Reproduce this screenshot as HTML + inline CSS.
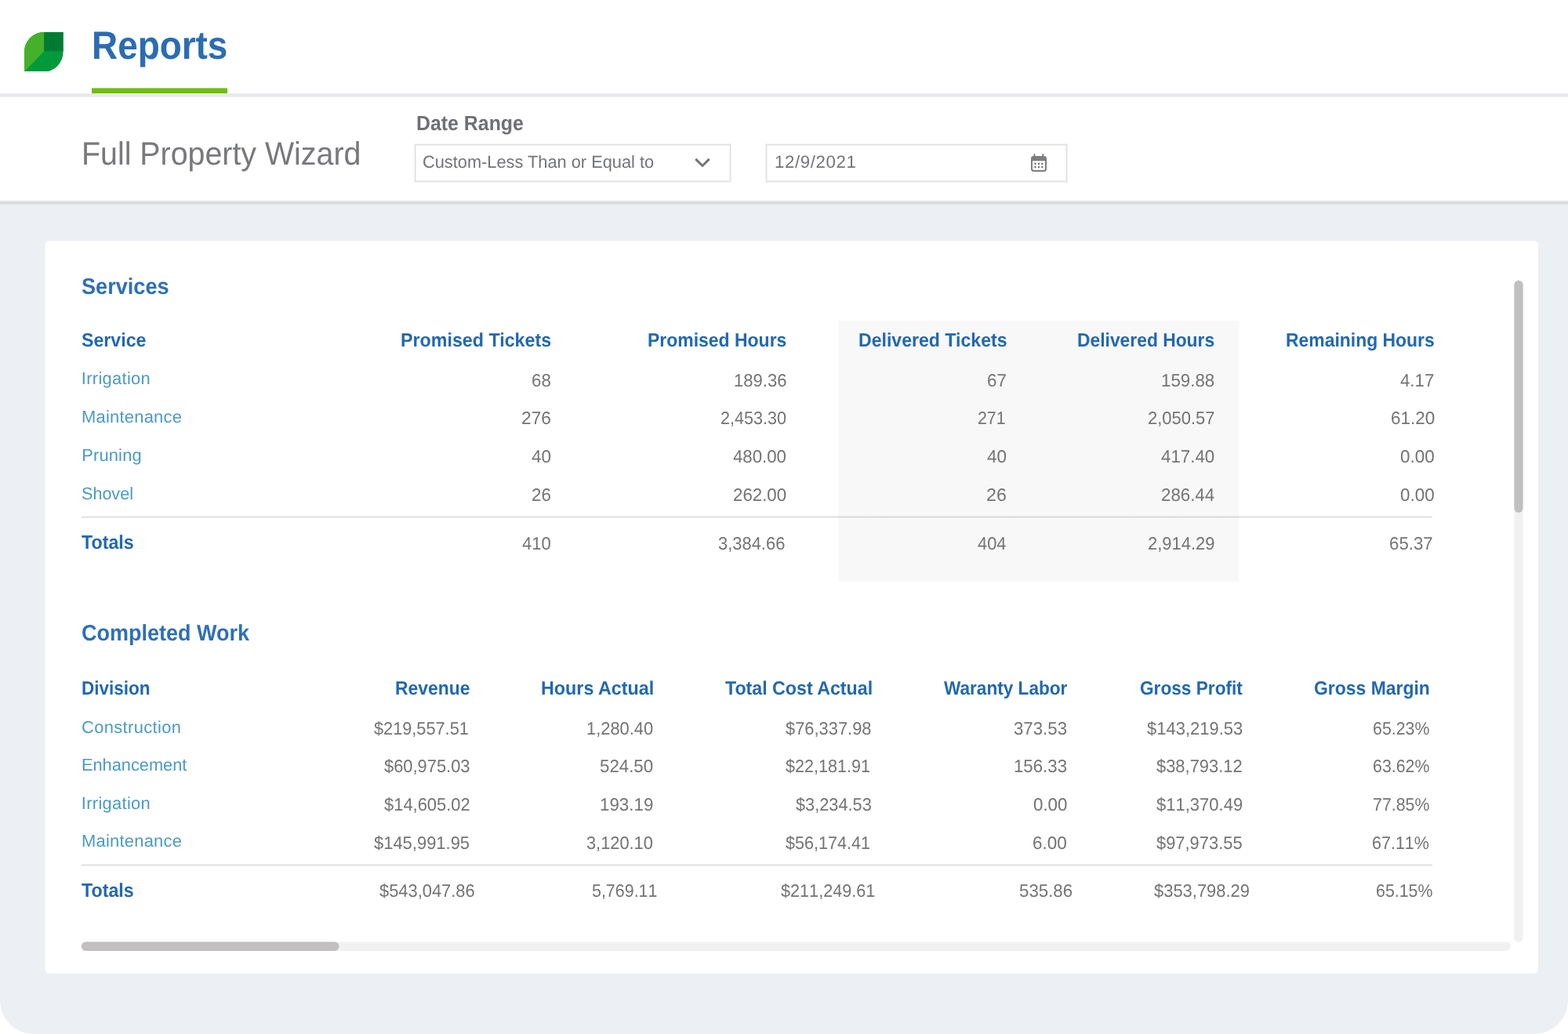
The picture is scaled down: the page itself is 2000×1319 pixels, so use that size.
<!DOCTYPE html>
<html lang="en">
<head>
<meta charset="utf-8">
<title>Reports</title>
<style>
html,body{margin:0;padding:0;}
body{width:2000px;height:1319px;overflow:hidden;background:#fff;position:relative;font-family:"Liberation Sans", sans-serif;}
.t{position:absolute;white-space:nowrap;line-height:0;transform-origin:0 0;text-rendering:geometricPrecision;}
.n{font-size:22.9px;color:#747476;font-kerning:none;}
.k0{font-size:50.3px;color:#2b6cb3;font-weight:700;}
.k1{font-size:41.3px;color:#78797c;}
.k2{font-size:26.3px;color:#6f7073;font-weight:700;}
.k3{font-size:22.2px;color:#737477;}
.k4{font-size:28.8px;color:#2e70b6;font-weight:700;}
.k5{font-size:24.4px;color:#2368af;font-weight:700;}
.k6{font-size:21.9px;color:#4b9ac3;}
.k7{font-size:24.6px;color:#2368af;font-weight:700;}

.abs{position:absolute;}
#page{position:absolute;left:0;top:0;width:2000px;height:1319px;background:#eceff4;border-radius:0 0 43px 43px;overflow:hidden;will-change:transform;}
#hdr{position:absolute;left:0;top:0;width:2000px;height:119px;background:#fff;}
#hdrline{position:absolute;left:0;top:119px;width:2000px;height:5px;background:linear-gradient(#eaebee 0 1px,#e8e9ed 1px 4px,#eff0f3 4px 5px);}
#tabline{position:absolute;left:117px;top:112px;width:173px;height:7px;background:linear-gradient(#a5d46f 0 1px,#74ba21 1px 5px,#6cb90f 5px 7px);}
#filter{position:absolute;left:0;top:124px;width:2000px;height:133px;background:#fff;}
#filterline{position:absolute;left:0;top:255px;width:2000px;height:7px;background:linear-gradient(#fafafa 0 1px,#e9eaec 1px 2px,#dcdde0 2px 3px,#d9dade 3px 4px,#dbdce0 4px 5px,#e3e5e9 5px 6px,#eaecf1 6px 7px);}
#shade{position:absolute;left:1069px;top:409px;width:511px;height:333px;background:#f8f8f8;}
.sep{position:absolute;left:104px;width:1723px;height:3px;background:linear-gradient(rgba(0,0,0,.07) 0 1px,rgba(10,20,40,.125) 1px 2px,rgba(0,0,0,.065) 2px 3px);}
.box{position:absolute;box-sizing:border-box;border:1px solid #dfe0e2;background:#fff;box-shadow:0 0 0 1px #f3f3f4, inset 0 0 0 1px #f1f1f2;}
</style>
</head>
<body>
<div id="page">
<div id="hdr"></div>
<div id="hdrline"></div>
<div id="tabline"></div>
<div id="filter"></div>
<div id="filterline"></div>
<svg class="abs" style="left:31.3px;top:40.8px" width="49.6" height="50.6" viewBox="0 0 50 50" preserveAspectRatio="none">
  <path d="M0 50 L0 25 A25 25 0 0 1 25 0 L50 0 L50 25 A25 25 0 0 1 25 50 Z" fill="#009a3a"/>
  <path d="M0 50 L0 25 A25 25 0 0 1 25 0 L25.5 0 L25.5 24 Z" fill="#45b02a"/>
  <rect x="25.5" y="0" width="24.5" height="24" fill="#007b33"/>
</svg>
<div class="box" style="left:529px;top:184px;width:403px;height:48px;"></div>
<div class="box" style="left:977px;top:184px;width:384px;height:48px;"></div>
<svg class="abs" style="left:885px;top:200.4px" width="22" height="14" viewBox="0 0 22 14"><path d="M2.3 2.9 L11 11.5 L19.7 2.9" fill="none" stroke="#727476" stroke-width="3"/></svg>
<svg class="abs" style="left:1314px;top:196px" width="22" height="24" viewBox="0 0 22 24">
  <rect x="2" y="3.9" width="18" height="18" rx="2.4" fill="none" stroke="#7b7d80" stroke-width="2"/>
  <rect x="2" y="3.9" width="18" height="5.4" fill="#7b7d80"/>
  <rect x="4.5" y="0.1" width="1.9" height="5" rx=".9" fill="#7b7d80"/><rect x="15.4" y="0.1" width="1.9" height="5" rx=".9" fill="#7b7d80"/>
  <g fill="#77797c"><rect x="5.4" y="11.6" width="2.2" height="2.4"/><rect x="9.9" y="11.6" width="2.2" height="2.4"/><rect x="14.2" y="11.6" width="2.2" height="2.4"/><rect x="5.4" y="15.9" width="2.2" height="2.4"/><rect x="9.9" y="15.9" width="2.2" height="2.4"/><rect x="14.2" y="15.9" width="2.2" height="2.4"/></g>
</svg>
<svg class="abs" style="left:0;top:300px" width="2000" height="950" viewBox="0 300 2000 950"><rect x="57.4" y="307.3" width="1904.6" height="934.5" rx="5.5" fill="#fff"/></svg>
<div id="shade"></div>
<div class="sep" style="top:658px"></div>
<div class="sep" style="top:1102px"></div>
<svg class="abs" style="left:0;top:0" width="2000" height="1319" viewBox="0 0 2000 1319">
  <rect x="1931.4" y="357.7" width="11.2" height="844" rx="5.6" fill="#f1f1f1"/>
  <rect x="1931.4" y="357.7" width="11.2" height="296.2" rx="5.6" fill="#c1bfc0"/>
  <rect x="103.8" y="1201.4" width="1823.2" height="11.7" rx="5.85" fill="#f1f1f1"/>
  <rect x="103.8" y="1201.4" width="328.6" height="11.7" rx="5.85" fill="#c1bfc0"/>
</svg>
<div class="t k0" style="left:117.27px;top:58px;transform:scaleX(0.912);">Reports</div>
<div class="t k1" style="left:104.43px;top:196px;transform:scaleX(0.9527);">Full Property Wizard</div>
<div class="t k2" style="left:531.36px;top:157px;transform:scaleX(0.9464);">Date Range</div>
<div class="t k3" style="left:539.03px;top:207px;transform:scaleX(0.982);">Custom-Less Than or Equal to</div>
<div class="t k3" style="left:987.95px;top:207px;letter-spacing:0.65px;">12/9/2021</div>
<div class="t k4" style="left:103.56px;top:366px;transform:scaleX(0.9414);">Services</div>
<div class="t k5" style="left:103.76px;top:435px;transform:scaleX(0.9499);">Service</div>
<div class="t k5" style="left:510.99px;top:435px;transform:scaleX(0.9533);">Promised Tickets</div>
<div class="t k5" style="left:826.06px;top:435px;transform:scaleX(0.9414);">Promised Hours</div>
<div class="t k5" style="left:1095.49px;top:435px;transform:scaleX(0.9465);">Delivered Tickets</div>
<div class="t k5" style="left:1374.06px;top:435px;transform:scaleX(0.9364);">Delivered Hours</div>
<div class="t k5" style="left:1639.75px;top:435px;transform:scaleX(0.9395);">Remaining Hours</div>
<div class="t k6" style="left:103.8px;top:483px;letter-spacing:0.31px;">Irrigation</div>
<div class="t k6" style="left:103.99px;top:532px;letter-spacing:0.26px;">Maintenance</div>
<div class="t k6" style="left:104.14px;top:581px;letter-spacing:0.18px;">Pruning</div>
<div class="t k6" style="left:103.91px;top:630px;transform:scaleX(0.9851);">Shovel</div>
<div class="t n" style="left:678.35px;top:485px;transform:scaleX(0.9748);">68</div>
<div class="t n" style="left:936.46px;top:485px;transform:scaleX(0.9648);">189.36</div>
<div class="t n" style="left:1258.52px;top:485px;transform:scaleX(0.9776);">67</div>
<div class="t n" style="left:1481.33px;top:485px;transform:scaleX(0.9754);">159.88</div>
<div class="t n" style="left:1786.23px;top:485px;transform:scaleX(0.9711);">4.17</div>
<div class="t n" style="left:665.21px;top:533.4px;transform:scaleX(0.9955);">276</div>
<div class="t n" style="left:918.66px;top:533.4px;transform:scaleX(0.9431);">2,453.30</div>
<div class="t n" style="left:1246.57px;top:533.4px;transform:scaleX(0.9325);">271</div>
<div class="t n" style="left:1463.53px;top:533.4px;transform:scaleX(0.9594);">2,050.57</div>
<div class="t n" style="left:1773.52px;top:533.4px;transform:scaleX(0.9811);">61.20</div>
<div class="t n" style="left:677.53px;top:582px;transform:scaleX(0.9778);">40</div>
<div class="t n" style="left:935.11px;top:582px;transform:scaleX(0.9704);">480.00</div>
<div class="t n" style="left:1259.15px;top:582px;transform:scaleX(0.9806);">40</div>
<div class="t n" style="left:1481.11px;top:582px;transform:scaleX(0.9748);">417.40</div>
<div class="t n" style="left:1786.44px;top:582px;transform:scaleX(0.9788);">0.00</div>
<div class="t n" style="left:678.38px;top:630.8px;transform:scaleX(0.9745);">26</div>
<div class="t n" style="left:935.39px;top:630.8px;transform:scaleX(0.9724);">262.00</div>
<div class="t n" style="left:1257.71px;top:630.8px;transform:scaleX(1.0133);">26</div>
<div class="t n" style="left:1481.15px;top:630.8px;transform:scaleX(0.9735);">286.44</div>
<div class="t n" style="left:1786.44px;top:630.8px;transform:scaleX(0.9788);">0.00</div>
<div class="t k7" style="left:104.2px;top:693px;transform:scaleX(0.9447);">Totals</div>
<div class="t n" style="left:665.75px;top:692.5px;transform:scaleX(0.961);">410</div>
<div class="t n" style="left:915.74px;top:692.5px;transform:scaleX(0.9579);">3,384.66</div>
<div class="t n" style="left:1247.15px;top:692.5px;transform:scaleX(0.9529);">404</div>
<div class="t n" style="left:1463.51px;top:692.5px;transform:scaleX(0.9594);">2,914.29</div>
<div class="t n" style="left:1771.53px;top:692.5px;transform:scaleX(0.9721);">65.37</div>
<div class="t k4" style="left:104.43px;top:808px;transform:scaleX(0.9371);">Completed Work</div>
<div class="t k5" style="left:104.38px;top:879px;transform:scaleX(0.9233);">Division</div>
<div class="t k5" style="left:504.28px;top:879px;transform:scaleX(0.9388);">Revenue</div>
<div class="t k5" style="left:690.22px;top:879px;transform:scaleX(0.9559);">Hours Actual</div>
<div class="t k5" style="left:924.68px;top:879px;transform:scaleX(0.9507);">Total Cost Actual</div>
<div class="t k5" style="left:1203.8px;top:879px;transform:scaleX(0.9264);">Waranty Labor</div>
<div class="t k5" style="left:1454.02px;top:879px;transform:scaleX(0.9283);">Gross Profit</div>
<div class="t k5" style="left:1676.16px;top:879px;transform:scaleX(0.9405);">Gross Margin</div>
<div class="t k6" style="left:104px;top:928px;letter-spacing:0.36px;">Construction</div>
<div class="t k6" style="left:104.23px;top:976px;transform:scaleX(0.9943);">Enhancement</div>
<div class="t k6" style="left:103.8px;top:1025px;letter-spacing:0.31px;">Irrigation</div>
<div class="t k6" style="left:103.99px;top:1073px;letter-spacing:0.26px;">Maintenance</div>
<div class="t n" style="left:477.29px;top:928.6px;transform:scaleX(0.9492);">$219,557.51</div>
<div class="t n" style="left:748.05px;top:928.6px;transform:scaleX(0.955);">1,280.40</div>
<div class="t n" style="left:1001.6px;top:928.6px;transform:scaleX(0.9554);">$76,337.98</div>
<div class="t n" style="left:1292.72px;top:928.6px;transform:scaleX(0.9717);">373.53</div>
<div class="t n" style="left:1463.43px;top:928.6px;transform:scaleX(0.9604);">$143,219.53</div>
<div class="t n" style="left:1750.82px;top:928.6px;transform:scaleX(0.9332);">65.23%</div>
<div class="t n" style="left:490.47px;top:977.4px;transform:scaleX(0.9556);">$60,975.03</div>
<div class="t n" style="left:764.56px;top:977.4px;transform:scaleX(0.9731);">524.50</div>
<div class="t n" style="left:1001.76px;top:977.4px;transform:scaleX(0.9431);">$22,181.91</div>
<div class="t n" style="left:1293.38px;top:977.4px;transform:scaleX(0.9712);">156.33</div>
<div class="t n" style="left:1475.3px;top:977.4px;transform:scaleX(0.9571);">$38,793.12</div>
<div class="t n" style="left:1750.82px;top:977.4px;transform:scaleX(0.9332);">63.62%</div>
<div class="t n" style="left:490.47px;top:1025.6px;transform:scaleX(0.9574);">$14,605.02</div>
<div class="t n" style="left:764.53px;top:1025.6px;transform:scaleX(0.9765);">193.19</div>
<div class="t n" style="left:1015.25px;top:1025.6px;transform:scaleX(0.9505);">$3,234.53</div>
<div class="t n" style="left:1317.79px;top:1025.6px;transform:scaleX(0.9739);">0.00</div>
<div class="t n" style="left:1474.54px;top:1025.6px;transform:scaleX(0.9614);">$11,370.49</div>
<div class="t n" style="left:1750.82px;top:1025.6px;transform:scaleX(0.933);">77.85%</div>
<div class="t n" style="left:476.74px;top:1075px;transform:scaleX(0.9588);">$145,991.95</div>
<div class="t n" style="left:747.82px;top:1075px;transform:scaleX(0.9517);">3,120.10</div>
<div class="t n" style="left:1001.76px;top:1075px;transform:scaleX(0.9431);">$56,174.41</div>
<div class="t n" style="left:1316.95px;top:1075px;transform:scaleX(0.983);">6.00</div>
<div class="t n" style="left:1475.19px;top:1075px;transform:scaleX(0.9564);">$97,973.55</div>
<div class="t n" style="left:1749.59px;top:1075px;transform:scaleX(0.9399);">67.11%</div>
<div class="t k7" style="left:104.2px;top:1137px;transform:scaleX(0.9447);">Totals</div>
<div class="t n" style="left:483.73px;top:1136.4px;transform:scaleX(0.9558);">$543,047.86</div>
<div class="t n" style="left:754.81px;top:1136.4px;transform:scaleX(0.9363);">5,769.11</div>
<div class="t n" style="left:995.84px;top:1136.4px;transform:scaleX(0.9457);">$211,249.61</div>
<div class="t n" style="left:1299.56px;top:1136.4px;transform:scaleX(0.9734);">535.86</div>
<div class="t n" style="left:1472.31px;top:1136.4px;transform:scaleX(0.9581);">$353,798.29</div>
<div class="t n" style="left:1754.76px;top:1136.4px;transform:scaleX(0.9331);">65.15%</div>
</div>
</body>
</html>
